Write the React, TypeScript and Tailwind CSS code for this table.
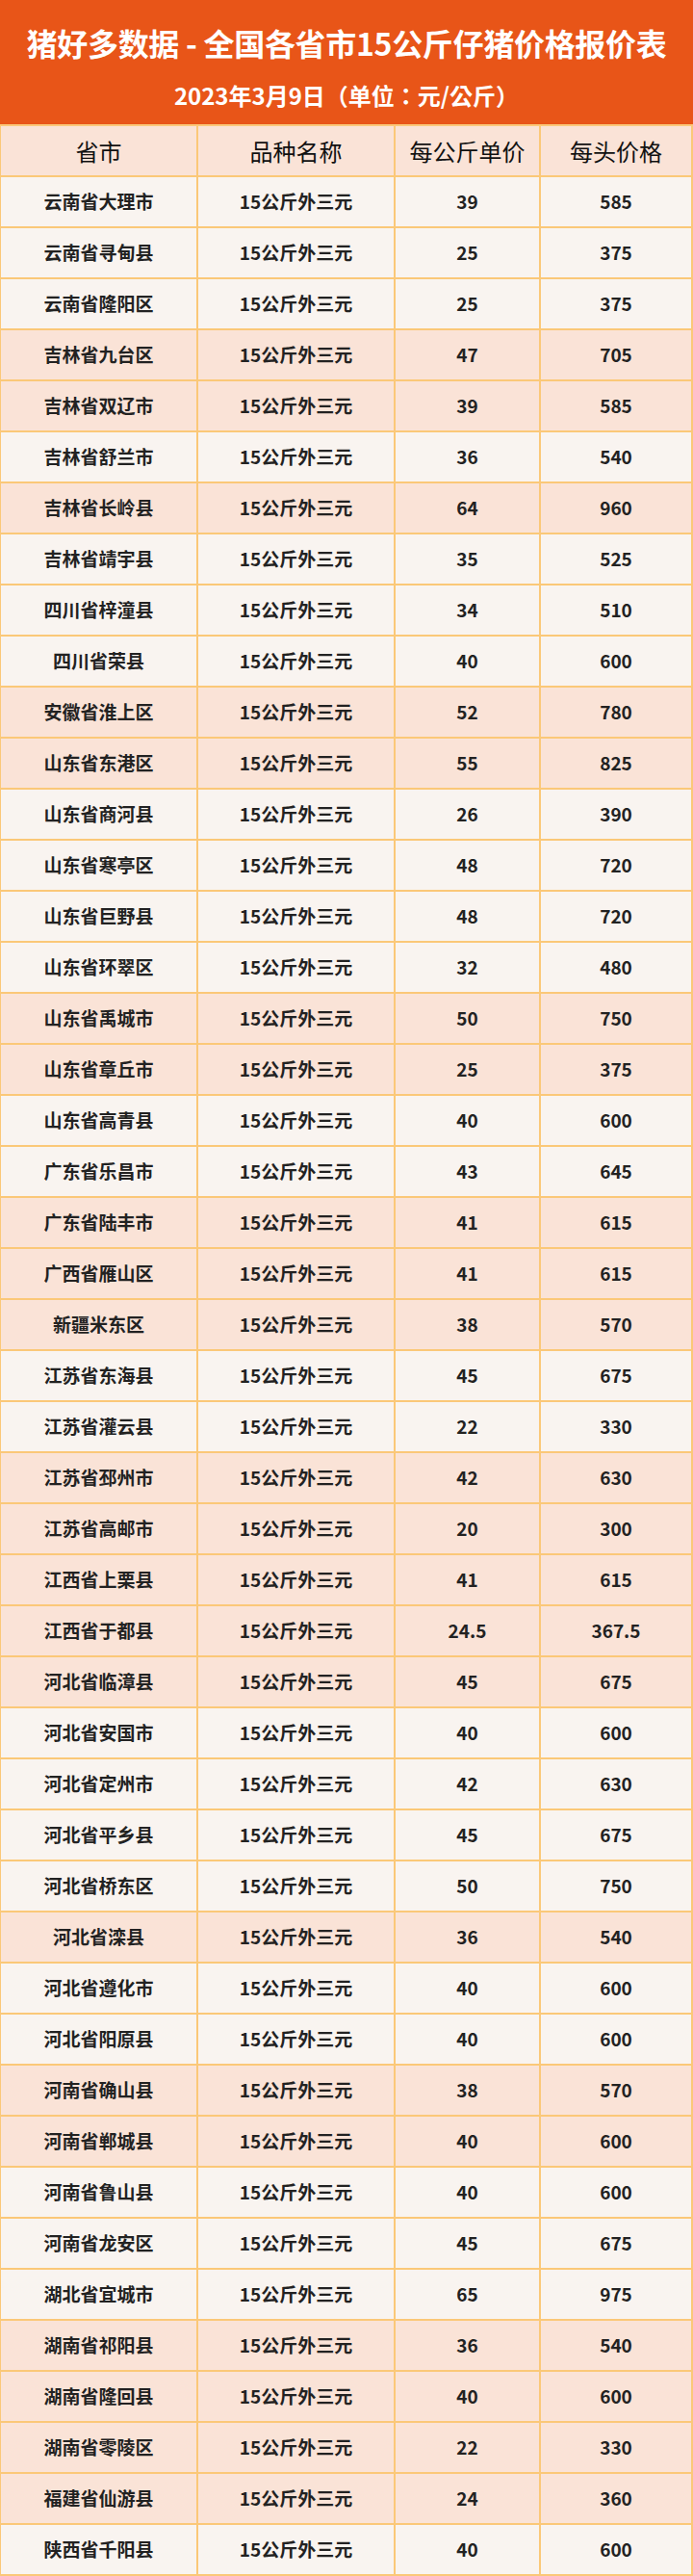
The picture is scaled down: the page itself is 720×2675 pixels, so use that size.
import React from "react";

type Row = [string, number | string, number | string, boolean];

// [city, per-kg price, per-head price, peach background]
const rows: Row[] = [
  ["云南省大理市", 39, 585, false],
  ["云南省寻甸县", 25, 375, false],
  ["云南省隆阳区", 25, 375, false],
  ["吉林省九台区", 47, 705, true],
  ["吉林省双辽市", 39, 585, true],
  ["吉林省舒兰市", 36, 540, false],
  ["吉林省长岭县", 64, 960, true],
  ["吉林省靖宇县", 35, 525, false],
  ["四川省梓潼县", 34, 510, false],
  ["四川省荣县", 40, 600, false],
  ["安徽省淮上区", 52, 780, true],
  ["山东省东港区", 55, 825, true],
  ["山东省商河县", 26, 390, false],
  ["山东省寒亭区", 48, 720, false],
  ["山东省巨野县", 48, 720, false],
  ["山东省环翠区", 32, 480, false],
  ["山东省禹城市", 50, 750, true],
  ["山东省章丘市", 25, 375, true],
  ["山东省高青县", 40, 600, false],
  ["广东省乐昌市", 43, 645, false],
  ["广东省陆丰市", 41, 615, true],
  ["广西省雁山区", 41, 615, true],
  ["新疆米东区", 38, 570, true],
  ["江苏省东海县", 45, 675, false],
  ["江苏省灌云县", 22, 330, false],
  ["江苏省邳州市", 42, 630, true],
  ["江苏省高邮市", 20, 300, true],
  ["江西省上栗县", 41, 615, true],
  ["江西省于都县", "24.5", "367.5", true],
  ["河北省临漳县", 45, 675, true],
  ["河北省安国市", 40, 600, false],
  ["河北省定州市", 42, 630, false],
  ["河北省平乡县", 45, 675, false],
  ["河北省桥东区", 50, 750, false],
  ["河北省滦县", 36, 540, true],
  ["河北省遵化市", 40, 600, false],
  ["河北省阳原县", 40, 600, false],
  ["河南省确山县", 38, 570, true],
  ["河南省郸城县", 40, 600, true],
  ["河南省鲁山县", 40, 600, false],
  ["河南省龙安区", 45, 675, false],
  ["湖北省宜城市", 65, 975, false],
  ["湖南省祁阳县", 36, 540, true],
  ["湖南省隆回县", 40, 600, true],
  ["湖南省零陵区", 22, 330, true],
  ["福建省仙游县", 24, 360, true],
  ["陕西省千阳县", 40, 600, false],
];

const headers = ["省市", "品种名称", "每公斤单价", "每头价格"];

export default function App() {
  return (
    <div
      className="w-[720px] bg-white"
      style={{ fontFamily: '"Noto Sans CJK SC", "Noto Sans", sans-serif' }}
    >
      {/* title block */}
      <div className="flex h-[129px] flex-col items-center bg-[#e85518] pt-[28px] text-white font-bold">
        <div className="text-[32px] leading-[32px] tracking-[-0.3px] whitespace-nowrap">
          猪好多数据 - 全国各省市15公斤仔猪价格报价表
        </div>
        {/* TC face centres the full-width brackets and colon like the original */}
        <div className="mt-[27px] font-['Noto_Sans_CJK_TC','Noto_Sans_CJK_SC',sans-serif] text-[24px] leading-[24px] whitespace-nowrap">
          2023年3月9日（单位：元/公斤）
        </div>
      </div>

      {/* table */}
      <div className="grid grid-cols-[203px_203px_149px_156px] gap-[2px] bg-[#fbc878] pl-[1px] pr-[2px] py-[2px]">
        {headers.map((h) => (
          <div
            key={h}
            className="flex h-[51px] items-center justify-center bg-[#fae3d7] text-[24px] text-[#111111]"
          >
            {h}
          </div>
        ))}
        {rows.map(([city, kg, head, peach]) => {
          const bg = peach ? "bg-[#fae3d7]" : "bg-[#f9f4f0]";
          const cell = `flex h-[51px] items-center justify-center text-[19px] font-bold text-[#222222] ${bg}`;
          return (
            <React.Fragment key={city}>
              <div className={cell}>{city}</div>
              <div className={cell}>15公斤外三元</div>
              <div className={cell}>{kg}</div>
              <div className={cell}>{head}</div>
            </React.Fragment>
          );
        })}
      </div>
    </div>
  );
}
